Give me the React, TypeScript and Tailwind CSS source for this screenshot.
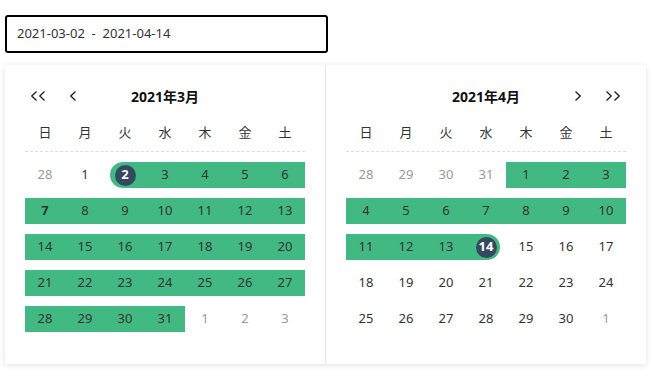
import React from "react"

type Cell = { d: number; muted?: boolean; bold?: boolean }

const FONT = { fontFamily: '"Noto Sans", "Noto Sans CJK JP", sans-serif' }
const WEEK = ["日", "月", "火", "水", "木", "金", "土"]

function build(prevTail: number[], days: number, nextHead: number): Cell[][] {
  const cells: Cell[] = [
    ...prevTail.map((d) => ({ d, muted: true })),
    ...Array.from({ length: days }, (_, i) => ({ d: i + 1 })),
    ...Array.from({ length: nextHead }, (_, i) => ({ d: i + 1, muted: true })),
  ]
  const rows: Cell[][] = []
  for (let i = 0; i < cells.length; i += 7) rows.push(cells.slice(i, i + 7))
  return rows
}

const march = build([28], 31, 3)
const april = build([28, 29, 30, 31], 30, 1)
march[1][0].bold = true

function Chevron({ dir, double }: { dir: "l" | "r"; double?: boolean }) {
  const one = (x: number) =>
    dir === "l" ? `M${x + 5.5} 0.5 L${x + 0.8} 5 L${x + 5.5} 9.5` : `M${x + 0.5} 0.5 L${x + 5.2} 5 L${x + 0.5} 9.5`
  return (
    <svg width={double ? 14 : 6} height={10} viewBox={`0 0 ${double ? 14 : 6} 10`} fill="none">
      <path d={one(0)} stroke="#222" strokeWidth="1.3" />
      {double && <path d={one(8)} stroke="#222" strokeWidth="1.3" />}
    </svg>
  )
}

function DayCell({ cell, inRange, start, end }: { cell: Cell; inRange: boolean; start?: boolean; end?: boolean }) {
  const text = cell.muted ? "text-[#9a9a9a]" : "text-[#333]"
  return (
    <div className="relative flex h-[26px] w-[40px] items-center justify-center">
      {inRange && (
        <div
          className={
            start
              ? "absolute inset-y-0 left-[5px] right-0 rounded-l-full bg-[#42b983]"
              : end
                ? "absolute inset-y-0 left-0 right-[6px] rounded-r-full bg-[#42b983]"
                : "absolute inset-0 bg-[#42b983]"
          }
        />
      )}
      {start || end ? (
        <span className="relative flex h-[21px] w-[21px] items-center justify-center rounded-full bg-[#35495e] text-[13px] font-bold text-white">
          {cell.d}
        </span>
      ) : (
        <span className={`relative text-[13px] ${text} ${cell.bold ? "font-bold" : ""}`}>{cell.d}</span>
      )}
    </div>
  )
}

function Month({
  title,
  rows,
  isRange,
  left,
}: {
  title: string
  rows: Cell[][]
  isRange: (r: number, c: number) => { inRange: boolean; start?: boolean; end?: boolean }
  left?: boolean
}) {
  return (
    <div className="w-[320px] px-5">
      <div className="mt-[19px] flex h-[24px] items-center">
        <div className="flex w-[60px] items-center gap-[25px] pl-[6px]">
          {left && (
            <>
              <Chevron dir="l" double />
              <Chevron dir="l" />
            </>
          )}
        </div>
        <div className="flex-1 text-center text-[14px] font-bold text-[#111]">{title}</div>
        <div className="flex w-[60px] items-center justify-end gap-[25px] pr-[6px]">
          {!left && (
            <>
              <Chevron dir="r" />
              <Chevron dir="r" double />
            </>
          )}
        </div>
      </div>
      <div className="mt-[13px] flex border-b border-dashed border-[#dcdcdc] pb-[6px]">
        {WEEK.map((w) => (
          <div key={w} className="flex h-[24px] w-[40px] items-center justify-center text-[13px] text-[#333]">
            {w}
          </div>
        ))}
      </div>
      <div className="mt-[5px]">
        {rows.map((row, r) => (
          <div key={r} className="flex h-[36px] items-center">
            {row.map((cell, c) => {
              const s = isRange(r, c)
              return <DayCell key={c} cell={cell} {...s} />
            })}
          </div>
        ))}
      </div>
    </div>
  )
}

export default function App() {
  const marchRange = (r: number, c: number) => {
    if (r === 0 && c === 2) return { inRange: true, start: true }
    if (r === 0) return { inRange: c > 2 }
    if (r === 4) return { inRange: c < 4 }
    return { inRange: true }
  }
  const aprilRange = (r: number, c: number) => {
    if (r === 0) return { inRange: c >= 4 }
    if (r === 1) return { inRange: true }
    if (r === 2 && c === 3) return { inRange: true, end: true }
    if (r === 2) return { inRange: c < 3 }
    return { inRange: false }
  }
  return (
    <div className="h-[381px] w-[654px] bg-white pl-[5px] pt-[15px]" style={FONT}>
      <div className="flex h-[38px] w-[323px] items-center rounded-[3px] border-2 border-black pl-[10px] text-[13px] text-[#333]">
        2021-03-02&nbsp;&nbsp;-&nbsp;&nbsp;2021-04-14
      </div>
      <div className="mt-[12px] flex h-[299px] w-[641px] bg-white shadow-[0_1px_6px_rgba(0,0,0,0.12)]">
        <Month title="2021年3月" rows={march} isRange={marchRange} left />
        <div className="w-px bg-[#e6e6e6]" />
        <Month title="2021年4月" rows={april} isRange={aprilRange} />
      </div>
    </div>
  )
}
